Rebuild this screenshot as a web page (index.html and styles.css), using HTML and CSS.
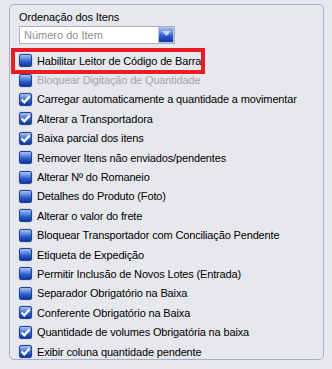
FILE: index.html
```html
<!DOCTYPE html>
<html>
<head>
<meta charset="utf-8">
<link rel="stylesheet" href="styles.css">
</head>
<body>
<div class="group">
  <div class="caption">Ordenação dos Itens</div>
  <div class="combo">
    <span class="combo-text">Número do Item</span>
    <span class="combo-btn"><svg width="9" height="6" viewBox="0 0 9 6"><path d="M0 0h9L4.5 5z" fill="#c9d6f4"/></svg></span>
  </div>
  <ul class="list">
    <li class="row"><span class="cb"></span><span class="lbl">Habilitar Leitor de Código de Barra</span></li>
    <li class="row disabled"><span class="cb"></span><span class="lbl">Bloquear Digitação de Quantidade</span></li>
    <li class="row"><span class="cb"><svg class="tick" viewBox="0 0 11 11"><path d="M1.5 5.5L4.3 8.3L9.5 2.5" /></svg></span><span class="lbl">Carregar automaticamente a quantidade a movimentar</span></li>
    <li class="row"><span class="cb"><svg class="tick" viewBox="0 0 11 11"><path d="M1.5 5.5L4.3 8.3L9.5 2.5" /></svg></span><span class="lbl">Alterar a Transportadora</span></li>
    <li class="row"><span class="cb"><svg class="tick" viewBox="0 0 11 11"><path d="M1.5 5.5L4.3 8.3L9.5 2.5" /></svg></span><span class="lbl">Baixa parcial dos itens</span></li>
    <li class="row"><span class="cb"></span><span class="lbl">Remover Itens não enviados/pendentes</span></li>
    <li class="row"><span class="cb"></span><span class="lbl">Alterar Nº do Romaneio</span></li>
    <li class="row"><span class="cb"></span><span class="lbl">Detalhes do Produto (Foto)</span></li>
    <li class="row"><span class="cb"></span><span class="lbl">Alterar o valor do frete</span></li>
    <li class="row"><span class="cb"></span><span class="lbl">Bloquear Transportador com Conciliação Pendente</span></li>
    <li class="row"><span class="cb"></span><span class="lbl">Etiqueta de Expedição</span></li>
    <li class="row"><span class="cb"></span><span class="lbl">Permitir Inclusão de Novos Lotes (Entrada)</span></li>
    <li class="row"><span class="cb"></span><span class="lbl">Separador Obrigatório na Baixa</span></li>
    <li class="row"><span class="cb"><svg class="tick" viewBox="0 0 11 11"><path d="M1.5 5.5L4.3 8.3L9.5 2.5" /></svg></span><span class="lbl">Conferente Obrigatório na Baixa</span></li>
    <li class="row"><span class="cb"><svg class="tick" viewBox="0 0 11 11"><path d="M1.5 5.5L4.3 8.3L9.5 2.5" /></svg></span><span class="lbl">Quantidade de volumes Obrigatória na baixa</span></li>
    <li class="row"><span class="cb"><svg class="tick" viewBox="0 0 11 11"><path d="M1.5 5.5L4.3 8.3L9.5 2.5" /></svg></span><span class="lbl">Exibir coluna quantidade pendente</span></li>
  </ul>
</div>
<div class="highlight"></div>
</body>
</html>
```

FILE: styles.css
```css
html, body {
  margin: 0;
  padding: 0;
  background: #e7e8ee;
  width: 332px;
  height: 369px;
  overflow: hidden;
  font-family: "Liberation Sans", Arial, sans-serif;
  font-size: 11px;
  color: #000;
}
.group {
  position: relative;
  margin: 4px 0 0 9px;
  width: 315px;
  height: 356px;
  border: 1px solid #a7b0cb;
  border-radius: 5px;
  padding: 6px 0 0 9px;
  box-sizing: border-box;
}
.caption {
  line-height: 13px;
  height: 13px;
  letter-spacing: -0.1px;
}
.combo {
  margin-top: 2px;
  width: 156px;
  height: 18px;
  box-sizing: border-box;
  border: 1px solid #a9b1c3;
  background: #fff;
  display: flex;
  align-items: center;
}
.combo-text {
  flex: 1;
  padding-left: 4px;
  color: #8e8e8e;
  line-height: 16px;
}
.combo-btn {
  width: 16px;
  height: 16px;
  box-sizing: border-box;
  border: 1px solid #b7c4e6;
  background: linear-gradient(to bottom, #9bb6ef 0%, #5f86da 35%, #2a57c4 60%, #0b37a3 100%);
  display: flex;
  justify-content: center;
  align-items: flex-start;
  padding-top: 3px;
}
.list {
  list-style: none;
  margin: 7px 0 0 0;
  padding: 0;
}
.row {
  height: 19.4px;
  display: flex;
  align-items: center;
}
.cb {
  width: 13px;
  height: 13px;
  box-sizing: border-box;
  border: 1px solid #21438f;
  border-radius: 2px;
  background: linear-gradient(to bottom, #a9c1f2 0%, #6a92e2 30%, #2d5cc8 60%, #0c37a2 100%);
  box-shadow: 0 0 0 0.5px #c3cbe0;
  flex: none;
  display: flex;
  align-items: center;
  justify-content: center;
}
.tick {
  width: 11px;
  height: 11px;
  fill: none;
  stroke: #fff;
  stroke-width: 2.2;
}
.lbl {
  margin-left: 5px;
  white-space: nowrap;
  letter-spacing: -0.15px;
}
.disabled .lbl {
  color: #a4a4a8;
}
.highlight {
  position: absolute;
  left: 11px;
  top: 48px;
  width: 194px;
  height: 26px;
  box-sizing: border-box;
  border: 4px solid #ea1c24;
}
```
